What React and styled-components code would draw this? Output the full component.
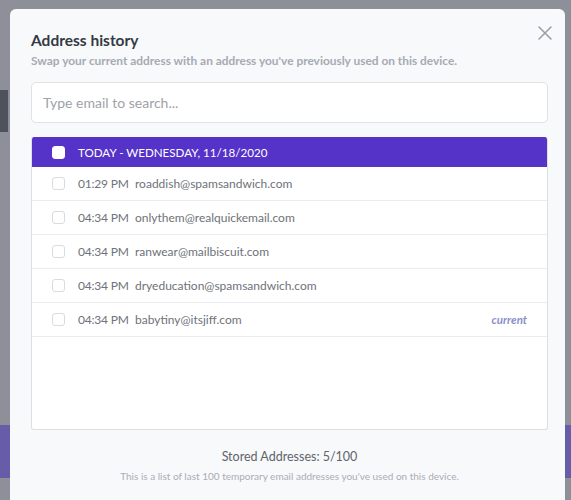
import React from 'react';
import styled, { createGlobalStyle } from 'styled-components';

const GlobalStyle = createGlobalStyle`
  html, body {
    margin: 0;
    padding: 0;
    background: #8d9099;
    font-family: Lato, "Open Sans", Arial, sans-serif;
  }
`;

const Page = styled.div`
  position: relative;
  width: 571px;
  height: 500px;
  overflow: hidden;
  background: #8d9099;
`;

/* page behind the dimmed overlay: only slivers show at the edges */
const BgGlyph = styled.div`
  margin-top: 90px;
  width: 8px;
  height: 42px;
  background: #4d525c;
`;

const BgBanner = styled.div`
  margin-top: 293px;
  height: 53px;
  background: #675ca8;
`;

const Modal = styled.div`
  position: absolute;
  top: 9px;
  left: 10px;
  width: 555px;
  height: 520px;
  box-sizing: border-box;
  padding: 20px 17px 0 21px;
  background: #f8f9fb;
  border-radius: 6px;
  display: flex;
  flex-direction: column;
`;

const Close = styled.button`
  position: absolute;
  top: 16px;
  right: 12px;
  width: 16px;
  height: 16px;
  padding: 0;
  border: 0;
  background: none;
  color: #9a9ca3;
  cursor: pointer;
  display: flex;
`;

const Title = styled.h2`
  margin: 0;
  font-size: 15.5px;
  line-height: 22px;
  font-weight: 700;
  color: #343945;
`;

const Subtitle = styled.p`
  margin: 1px 0 0;
  font-size: 11.9px;
  line-height: 18px;
  font-weight: 700;
  color: #a6aab3;
`;

const Search = styled.input`
  margin-top: 12px;
  height: 41px;
  box-sizing: border-box;
  width: 100%;
  border: 1px solid #e0e2e7;
  border-radius: 5px;
  background: #fff;
  padding: 0 11px;
  font-family: inherit;
  font-size: 14px;
  color: #333;
  outline: none;
  &::placeholder {
    color: #9ea2a9;
  }
`;

const List = styled.div`
  margin-top: 14px;
  height: 293px;
  box-sizing: border-box;
  border: 1px solid #dcdfe4;
  border-top: 0;
  border-radius: 3px;
  background: #fff;
  overflow: hidden;
`;

const Row = styled.div`
  display: flex;
  align-items: center;
  height: ${p => (p.$head ? 30 : 34)}px;
  box-sizing: border-box;
  padding: 0 20px;
  background: ${p => (p.$head ? '#5533c8' : '#fff')};
  color: ${p => (p.$head ? '#fff' : '#6e7279')};
  border-bottom: ${p => (p.$head ? '0' : '1px solid #eaecef')};
  font-size: 12px;
`;

const Check = styled.span`
  flex: none;
  width: 13px;
  height: 13px;
  box-sizing: border-box;
  border-radius: 3px;
  border: 1px solid ${p => (p.$head ? '#fff' : '#d8dbe0')};
  background: #fff;
  margin-right: 13px;
`;

const HeadLabel = styled.span`
  font-size: 11.6px;
  text-transform: uppercase;
`;

const Time = styled.span`
  flex: none;
  width: 57px;
  letter-spacing: -0.2px;
`;

const Email = styled.span`
  flex: 1;
`;

const Current = styled.span`
  font-size: 11.5px;
  font-style: italic;
  font-weight: 700;
  color: #8b8fcc;
`;

const Footer = styled.div`
  text-align: center;
  padding-top: 19px;
`;

const Stored = styled.div`
  font-size: 12.5px;
  line-height: 16px;
  color: #5f636b;
`;

const Note = styled.div`
  margin-top: 4px;
  font-size: 10px;
  line-height: 14px;
  color: #a9adb4;
`;

const entries = [
  { time: '01:29 PM', email: 'roaddish@spamsandwich.com' },
  { time: '04:34 PM', email: 'onlythem@realquickemail.com' },
  { time: '04:34 PM', email: 'ranwear@mailbiscuit.com' },
  { time: '04:34 PM', email: 'dryeducation@spamsandwich.com' },
  { time: '04:34 PM', email: 'babytiny@itsjiff.com', current: true },
];

export default function App() {
  return (
    <Page>
      <GlobalStyle />
      <BgGlyph />
      <BgBanner />
      <Modal>
        <Close aria-label="Close">
          <svg width="16" height="16" viewBox="0 0 16 16" fill="none" stroke="currentColor" strokeWidth="1.5" strokeLinecap="round">
            <path d="M2 2 L14 14 M14 2 L2 14" />
          </svg>
        </Close>
        <Title>Address history</Title>
        <Subtitle>Swap your current address with an address you've previously used on this device.</Subtitle>
        <Search placeholder="Type email to search..." />
        <List>
          <Row $head>
            <Check $head />
            <HeadLabel>Today - Wednesday, 11/18/2020</HeadLabel>
          </Row>
          {entries.map((e, i) => (
            <Row key={i}>
              <Check />
              <Time>{e.time}</Time>
              <Email>{e.email}</Email>
              {e.current && <Current>current</Current>}
            </Row>
          ))}
        </List>
        <Footer>
          <Stored>Stored Addresses: 5/100</Stored>
          <Note>This is a list of last 100 temporary email addresses you've used on this device.</Note>
        </Footer>
      </Modal>
    </Page>
  );
}
